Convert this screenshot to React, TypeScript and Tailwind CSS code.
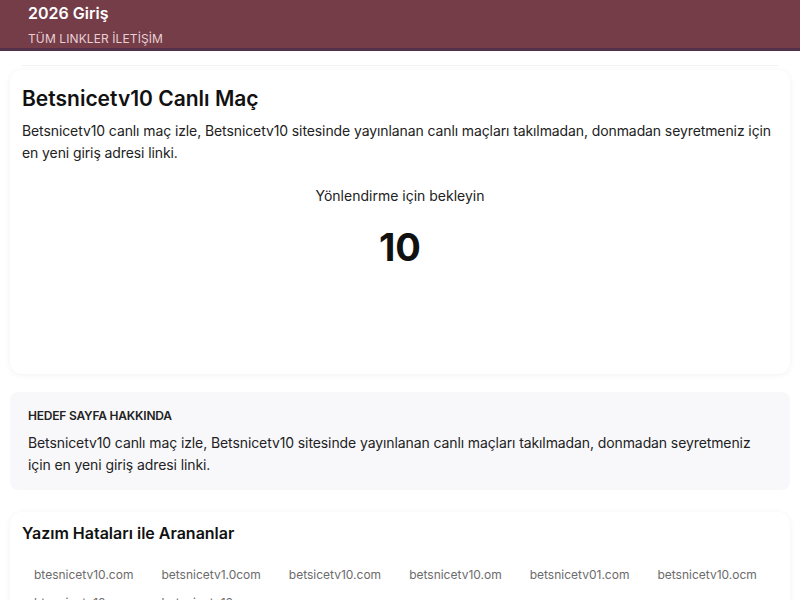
const typos = [
  'btesnicetv10.com',
  'betsnicetv1.0com',
  'betsicetv10.com',
  'betsnicetv10.om',
  'betsnicetv01.com',
  'betsnicetv10.ocm',
  'btesnicetv10.com',
  'betsnicetv10.cm',
];

export default function App() {
  return (
    <div className="min-h-screen bg-white text-[#111] font-['Inter','Noto_Sans',sans-serif]">
      {/* Header */}
      <header className="bg-[#743d48] border-b-[3px] border-[#52304a] h-[51px] px-[28px] pt-[3px]">
        <div className="text-white text-[16px] font-semibold leading-[20px]">2026 Giriş</div>
        <nav className="mt-[8px] text-[12px] leading-[16px] text-[#e9cfd4] tracking-[0.1px]">
          TÜM LINKLER İLETİŞİM
        </nav>
      </header>

      <div className="px-[10px] pt-[14px]">
        <div className="mx-[12px] h-[1px] bg-[#f3f3f5]" />

        {/* Main card */}
        <section className="mt-[4px] rounded-[12px] bg-white shadow-[0_1px_6px_rgba(0,0,0,0.06)] px-[12px] pt-[15px] pb-[20px] h-[304px]">
          <h1 className="text-[21px] font-semibold leading-[28px] text-[#111]">Betsnicetv10 Canlı Maç</h1>
          <p className="mt-[7px] text-[14px] leading-[22px] text-[#222] tracking-[-0.1px]">
            Betsnicetv10 canlı maç izle, Betsnicetv10 sitesinde yayınlanan canlı maçları takılmadan, donmadan seyretmeniz için en yeni giriş adresi linki.
          </p>
          <div className="mt-[22px] text-center text-[14px] leading-[20px] text-[#222]">Yönlendirme için bekleyin</div>
          <div className="mt-[18px] text-center text-[38px] font-bold leading-[46px] text-[#111]">10</div>
        </section>

        {/* About */}
        <section className="mt-[18px] rounded-[8px] bg-[#f8f8fb] px-[18px] pt-[16px] pb-[14px]">
          <div className="text-[12px] font-semibold leading-[16px] text-[#222] tracking-[-0.2px]">HEDEF SAYFA HAKKINDA</div>
          <p className="mt-[8px] text-[14px] leading-[22px] text-[#222] tracking-[-0.1px]">
            Betsnicetv10 canlı maç izle, Betsnicetv10 sitesinde yayınlanan canlı maçları takılmadan, donmadan seyretmeniz için en yeni giriş adresi linki.
          </p>
        </section>

        {/* Typos */}
        <section className="mt-[22px] rounded-[12px] bg-white shadow-[0_1px_6px_rgba(0,0,0,0.06)] px-[12px] pt-[10px] pb-[20px]">
          <h2 className="text-[16px] font-semibold leading-[22px] text-[#111]">Yazım Hataları ile Arananlar</h2>
          <div className="mt-[19px] flex flex-wrap gap-x-[4px] gap-y-[4px]">
            {typos.map((t, i) => (
              <span key={i} className="px-[12px] py-[2px] text-[12px] leading-[20px] text-[#6b6b6b]">
                {t}
              </span>
            ))}
          </div>
        </section>
      </div>
    </div>
  );
}
